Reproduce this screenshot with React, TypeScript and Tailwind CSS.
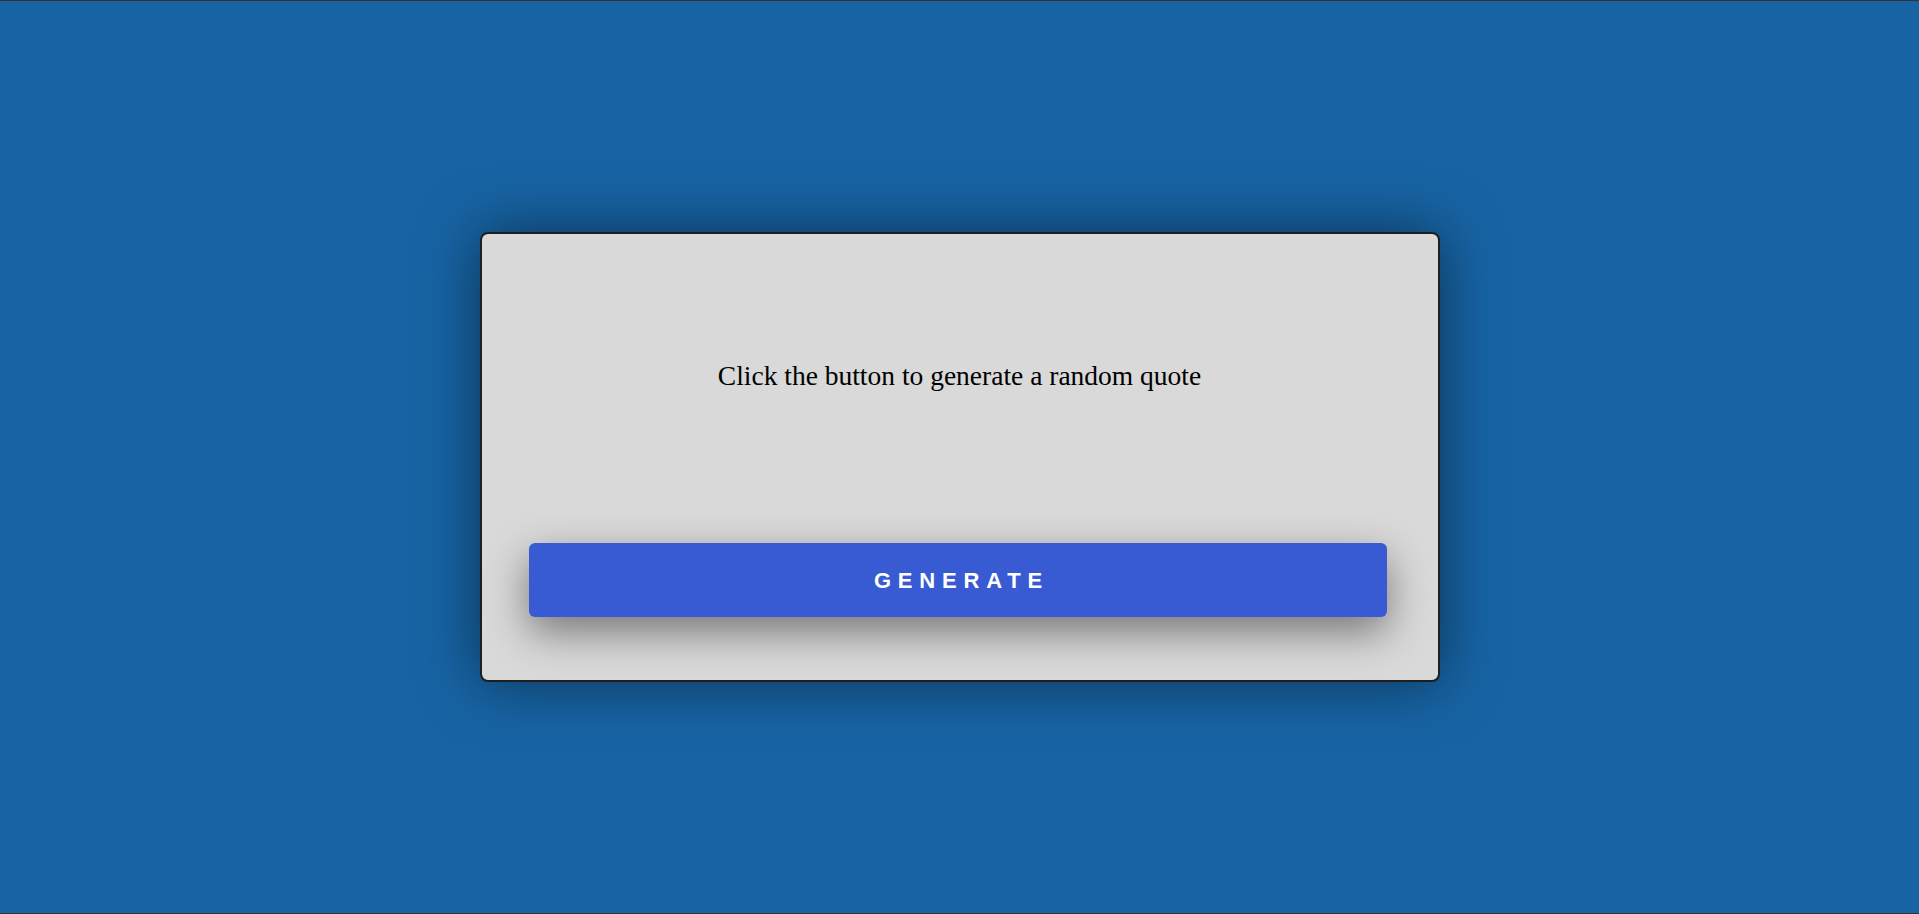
export default function App() {
  return (
    <div className="h-screen w-full border-y border-[#333333] bg-[#1764a4] flex items-center justify-center">
      <div className="w-[960px] h-[450px] rounded-lg border-2 border-[#1e1e1e] bg-[#d9d9d9] shadow-[0_0_60px_rgba(0,0,0,0.5)] flex flex-col items-center">
        <p className="mt-[126px] text-[27.5px] leading-[32px] text-black font-['Liberation_Serif','Times_New_Roman',serif]">
          Click the button to generate a random quote
        </p>
        <button className="mt-[151px] mr-[3px] w-[858px] h-[74px] rounded-md bg-[#385bd4] text-white text-[22px] font-bold tracking-[6.8px] pl-[6.8px] font-['Liberation_Sans',Arial,sans-serif] shadow-[0_15px_40px_rgba(0,0,0,0.45)]">
          GENERATE
        </button>
      </div>
    </div>
  );
}
